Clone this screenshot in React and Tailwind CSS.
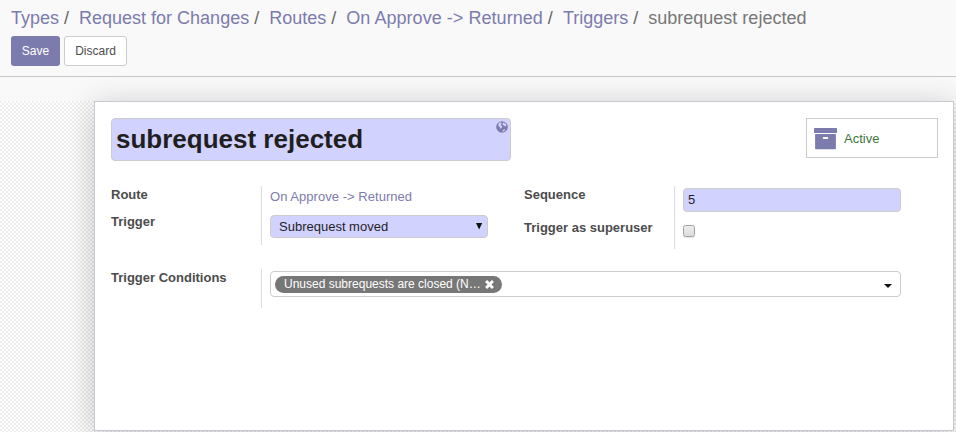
import React from "react";

const crumbs = ["Types", "Request for Changes", "Routes", "On Approve -> Returned", "Triggers"];

function Breadcrumb() {
  return (
    <ol className="flex h-[36px] pt-[5px] text-[18px] leading-[26px] whitespace-pre text-[#777777]">
      {crumbs.map((c) => (
        <li key={c} className={c.startsWith("On") ? "tracking-[0.045px]" : ""}>
          <a className="text-[#7c7bad]">{c}</a>
          <span className="pr-[5px] pl-[5px] text-[#666666]">/ </span>
        </li>
      ))}
      <li>subrequest rejected</li>
    </ol>
  );
}

function Label({ children, className }) {
  return <div className={"w-[150px] shrink-0 text-[13px] leading-[18px] font-bold text-[#4c4c4c] " + className}>{children}</div>;
}

function Globe() {
  return (
    <svg viewBox="0 0 12 12" className="absolute top-[2px] right-[2px] size-[12px]">
      <circle cx="6" cy="6" r="5.8" fill="#7c7bad" />
      <path
        d="M3.200 1.700 5 1.400 5.800 2 5.400 3 4.600 3.600 4.900 4.600 6 5 6.200 6 5.300 6.900 4.800 8 4.100 6.600 2.800 5.400 2.200 3.600ZM7.200 1.300 9.300 2.400 10.400 4 9.800 5.300 8.600 5.200 7.700 4.300 6.600 4 6.300 3 7.200 2.600ZM6.700 9.200 8.200 8.300 9.200 8.600 8.200 10.200 6.600 10.600Z"
        fill="#d2d2ff"
      />
    </svg>
  );
}

function ArchiveIcon() {
  return (
    <svg viewBox="0 0 23 22" className="mt-[1px] h-[22px] w-[23px] shrink-0" fill="#7c7bad">
      <rect x="0" y="0" width="23" height="5" rx="0.6" />
      <path
        fillRule="evenodd"
        d="M1.6 6H21.4a.5.5 0 0 1 .5.5V20.600a.6.6 0 0 1-.6.6H1.700a.6.6 0 0 1-.6-.6V6.500a.5.5 0 0 1 .5-.5ZM9.700 9a.9.9 0 0 0 0 1.900H13.300a.9.9 0 0 0 0-1.900Z"
      />
    </svg>
  );
}

export default function App() {
  return (
    <div className="flex h-[432px] w-[956px] flex-col overflow-hidden bg-[#f9f9f9] font-['Liberation_Sans',Arial,sans-serif] text-[13px] text-[#4c4c4c]">
      <header className="h-[77px] shrink-0 border-b border-[#c6c6c6] pl-[11px]">
        <Breadcrumb />
        <div className="flex gap-[4px] text-[12px]">
          <button className="h-[30px] w-[49px] rounded-[3px] bg-[#7c7bad] text-white">Save</button>
          <button className="h-[30px] w-[63px] rounded-[3px] border border-[#cccccc] bg-white">Discard</button>
        </div>
      </header>
      <main className="flex flex-1 flex-col overflow-hidden pt-[24px]">
        <div className="h-[331px] shrink-0 bg-[repeating-conic-gradient(#ffffff_0%_25%,#eeeeee_0%_50%)] bg-[length:4px_4px] pl-[94px]">
          <section className="h-[330px] w-[860px] border border-[#c8c8d3] bg-white pt-[16px] pr-[15px] pl-[16px] shadow-[0_5px_30px_rgba(0,0,0,0.22)]">
            <div className="flex justify-between">
              <div className="relative flex h-[43px] w-[400px] items-center rounded-[4px] border border-[#cccccc] bg-[#d2d2ff] pl-[4px] text-[26px] font-bold text-[#1f1f1f]">
                subrequest rejected
                <Globe />
              </div>
              <button className="flex h-[40px] w-[132px] items-center border border-[#cccccc] pt-[1px] pl-[7px] text-[#3c763d]">
                <ArchiveIcon />
                <span className="pt-[1px] pl-[7px]">Active</span>
              </button>
            </div>

            <div className="flex pt-[25px]">
              <div className="flex w-[413px]">
                <div>
                  <Label className="pb-[9px]">Route</Label>
                  <Label className="">Trigger</Label>
                </div>
                <div className="h-[59px] border-l border-[#dddddd] pl-[8px]">
                  <div className="h-[29px] pt-[2px] leading-[18px] tracking-[0.035px] text-[#7c7bad]">On Approve -&gt; Returned</div>
                  <div className="flex h-[23px] w-[218px] items-center justify-between rounded-[4px] border border-[#cccccc] bg-[#d2d2ff] pr-[4px] pl-[8px] text-[#1f1f1f]">
                    Subrequest moved
                    <svg viewBox="0 0 8 7" className="mb-[1px] h-[7px] w-[8px]" fill="#111111">
                      <path d="M1 0h6.200L4.100 6.500z" />
                    </svg>
                  </div>
                </div>
              </div>
              <div className="flex">
                <div>
                  <Label className="pb-[15px]">Sequence</Label>
                  <Label className="">Trigger as superuser</Label>
                </div>
                <div className="h-[63px] border-l border-[#dddddd] pt-[2px] pl-[8px]">
                  <div className="flex h-[24px] w-[218px] items-center rounded-[4px] border border-[#cccccc] bg-[#d2d2ff] pl-[4px] text-[#1f1f1f]">5</div>
                  <div className="mt-[13px] size-[12px] rounded-[2.5px] border border-[#a0a0a0] bg-linear-to-b from-[#eeeeee] to-[#dcdcdc] shadow-[0_1px_1px_rgba(0,0,0,0.1)]" />
                </div>
              </div>
            </div>

            <div className="flex pt-[20px]">
              <Label className="">Trigger Conditions</Label>
              <div className="h-[39px] border-l border-[#dddddd] pt-[2px] pl-[8px]">
                <div className="flex h-[26px] w-[631px] items-center justify-between rounded-[4px] border border-[#cccccc] pr-[8px] pl-[4px]">
                  <span className="flex h-[17px] w-[227px] items-center rounded-full bg-[#777777] pl-[9px] text-[12px] whitespace-nowrap text-white">
                    Unused subrequests are closed (N…
                    <svg viewBox="0 0 10 10" className="ml-[4.500px] size-[9px]" stroke="#ffffff" strokeWidth="3.200">
                      <path d="M1.200 1.200 8.800 8.800M8.800 1.200 1.200 8.800" />
                    </svg>
                  </span>
                  <svg viewBox="0 0 8 4" className="mt-[4px] h-[4px] w-[8px]" fill="#111111">
                    <path d="M0 0h8L4 4z" />
                  </svg>
                </div>
              </div>
            </div>
          </section>
        </div>
      </main>
    </div>
  );
}
